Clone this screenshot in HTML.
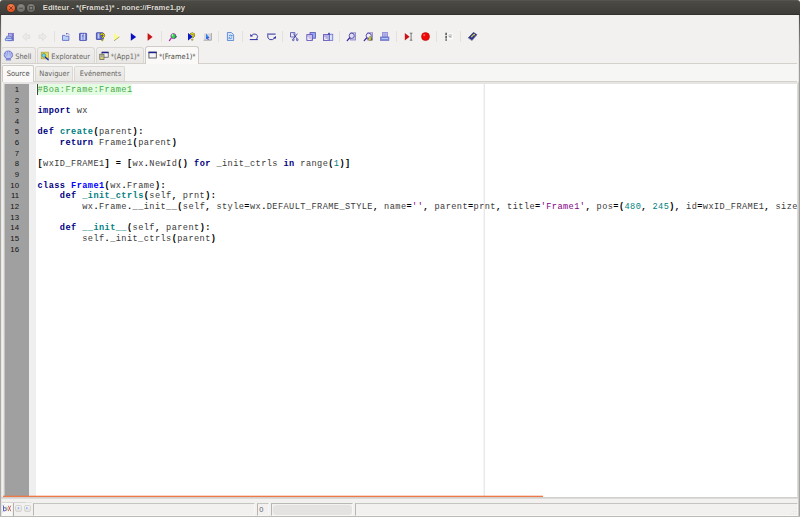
<!DOCTYPE html>
<html lang="fr">
<head>
<meta charset="utf-8">
<title>Editeur - *(Frame1)* - none://Frame1.py</title>
<style>
html,body{margin:0;padding:0;}
body{width:800px;height:517px;overflow:hidden;background:#f2f1f0;position:relative;
 font-family:"Liberation Sans","DejaVu Sans",sans-serif;color:#3c3b37;}
.abs{position:absolute;}
/* window title bar */
#titlebar{left:0;top:0;width:800px;height:15px;
 background:linear-gradient(#5b5a53 0%,#4b4a45 10%,#45443f 50%,#3d3c38 93%,#32312d 94%);
 border-radius:3px 3px 0 0;}
#titlebar .ttl{left:42.8px;top:1.6px;font-size:7.7px;line-height:11px;font-weight:bold;color:#dfdbd2;
 white-space:nowrap;text-shadow:0 0 1px #2a2925;}
.wbtn{width:8.4px;height:8.4px;border-radius:50%;top:3.85px;box-sizing:border-box;}
#bclose{left:6.75px;background:radial-gradient(circle at 50% 30%,#f6875c,#e8551f 65%,#df4a16);box-shadow:0 0 0 0.5px #3a2a22;}
#bmin{left:16.8px;background:radial-gradient(circle at 50% 30%,#8d8b84,#6d6c66 70%);box-shadow:0 0 0 0.5px #33322e;}
#bmax{left:26.8px;background:radial-gradient(circle at 50% 30%,#8d8b84,#6d6c66 70%);box-shadow:0 0 0 0.5px #33322e;}
#winleft{left:0;top:15px;width:1px;height:502px;background:linear-gradient(#4c4b46 0px,#8b8985 30px,#a9a7a3 60px,#aeaca8 100%);}
#winright{left:799px;top:15px;width:1px;height:502px;background:linear-gradient(#4c4b46 0px,#8b8985 30px,#a09e9a 60px,#a5a39f 100%);}
#winright2{left:798px;top:15px;width:1px;height:502px;background:linear-gradient(#e6e5e3 0px,#e6e5e3 66px,#cdcbc7 68px,#cdcbc7 100%);}
/* toolbar */
.sep{width:1px;height:13px;top:30px;background:#dcdad6;}
.ico{top:32px;width:11px;height:11px;}
/* notebook tabs */
.tab{box-sizing:border-box;border:1px solid #dbd8d4;border-bottom:none;border-radius:3px 3px 0 0;
 background:linear-gradient(#f0efed,#e9e7e4);font-family:"DejaVu Sans Condensed","DejaVu Sans","Liberation Sans",sans-serif;font-size:7.4px;line-height:10px;white-space:nowrap;color:#66655f;}
.tab.sel{z-index:2;background:#faf9f8;border-color:#cfccc7;color:#4a4945;}
.tab span{position:absolute;}
#tabline1{left:1px;top:63px;width:796px;height:1px;background:#d4d1cc;}
#tabline2{left:2px;top:81px;width:795px;height:1px;background:#d4d1cc;}
/* editor */
#edframe{left:3px;top:82px;width:795px;height:415px;background:#e6e5e3;}
#edl{left:4px;top:84px;width:1px;height:412px;background:#c6c5c4;}
#edr{left:797px;top:84px;width:1px;height:412px;background:#dddbd8;}
#winl1{left:1px;top:15px;width:1px;height:502px;background:#e6e5e3;}
#editor{left:5px;top:84px;width:791.5px;height:412px;background:#fff;overflow:hidden;}
#gutter{left:0;top:0;width:24px;height:412px;background:#a0a0a0;}
#fold{left:24px;top:0;width:7px;height:412px;background:#efefef;}
#edge{left:478px;top:0;width:2px;height:412px;background:linear-gradient(90deg,#f5f5f5 50%,#e9e9e9 50%);}
#caret{left:32px;top:0;width:1px;height:10.64px;background:#3a4a3a;}
.ln{left:0;width:14px;text-align:right;font-size:7.8px;line-height:10.64px;height:10.64px;color:#141414;
 font-family:"Liberation Sans","DejaVu Sans",sans-serif;}
.cl{left:32.5px;white-space:pre;font-family:"Liberation Mono","DejaVu Sans Mono",monospace;font-size:8.6px;letter-spacing:0.432px;
 line-height:10.64px;height:10.64px;color:#3a3a3a;}
.k{color:#00007f;font-weight:bold;}
.d{color:#007f7f;font-weight:bold;}
.c{color:#0000ff;font-weight:bold;}
.o{color:#000;font-weight:bold;}
.n{color:#007f7f;}
.s{color:#7f007f;}
.cm{color:#4aa84a;}
#cmbg{left:32.5px;top:0;width:94px;height:10.64px;background:#e3fde3;}
#hscroll{left:3px;top:496px;width:540px;height:1px;background:#ee7848;box-shadow:0 -1px 0 rgba(238,120,72,0.3);}
#edbottom{left:1px;top:497px;width:797px;height:1px;background:#d2d0cd;box-shadow:0 1px 0 #dddbd9;}
#htrack{left:5px;top:496px;width:792px;height:1px;background:#fff;}
/* status bar */
#status{left:0;top:497px;width:800px;height:20px;}
.sbtn{box-sizing:border-box;width:7px;height:7px;border:1px solid #d6d4d0;border-radius:2px;background:linear-gradient(#f4f4f3,#e4e3e1);}
.sfield{box-sizing:border-box;border:1px solid #c6c4c0;border-left-color:#b8b6b2;border-right-color:#f7f7f6;border-bottom-color:#f7f7f6;height:12.5px;}
</style>
</head>
<body>
<div id="titlebar" class="abs">
  <div id="bclose" class="abs wbtn"></div>
  <div id="bmin" class="abs wbtn"></div>
  <div id="bmax" class="abs wbtn"></div>
  <svg class="abs" style="left:0;top:0" width="40" height="14" viewBox="0 0 40 14">
   <path d="M9.3 6.4 l3.3 3.3 M12.6 6.4 l-3.3 3.3" stroke="#7a3014" stroke-width="0.9" stroke-linecap="round"/>
   <path d="M19.2 8.2 h3.6" stroke="#4a4944" stroke-width="1.1"/>
   <rect x="29.3" y="6.4" width="3.4" height="3.4" fill="none" stroke="#4a4944" stroke-width="0.9"/>
  </svg>
  <div class="abs ttl">Editeur - *(Frame1)* - none://Frame1.py</div>
</div>
<div id="winleft" class="abs"></div>
<div id="winright2" class="abs"></div>
<div id="winright" class="abs"></div>

<!-- TOOLBAR -->
<!--TB-->
<svg class="abs" style="left:0;top:28px" width="800" height="18" viewBox="0 28 800 18">
 <!-- separators -->
 <g fill="#e3e1de">
  <rect x="54" y="31" width="1" height="11"/><rect x="161" y="31" width="1" height="11"/>
  <rect x="218" y="31" width="1" height="11"/><rect x="242" y="31" width="1" height="11"/>
  <rect x="282" y="31" width="1" height="11"/><rect x="339" y="31" width="1" height="11"/>
  <rect x="396" y="31" width="1" height="11"/><rect x="436" y="31" width="1" height="11"/>
  <rect x="460" y="31" width="1" height="11"/>
 </g>
 <!-- 1 inspector / stacked docs -->
 <g>
  <rect x="8.6" y="33.3" width="5" height="7.4" fill="#b3acE4" stroke="#6a62bc" stroke-width="0.7"/>
  <rect x="11.8" y="34" width="1.4" height="6.2" fill="#7b72cc"/>
  <path d="M6.8 36.2 h3.4 l0.8 0.8 h0.8 v1.4 h-5.6z" fill="#b4cef7" stroke="#5566c2" stroke-width="0.7"/>
  <rect x="5.3" y="38.3" width="6.8" height="2.3" rx="0.6" fill="#bcd5f9" stroke="#4a5cbc" stroke-width="0.7"/>
 </g>
 <!-- 2 back arrow (disabled) -->
 <path d="M22.3 36.7 l4-3.8 v2.1 h3.5 v3.4 h-3.5 v2.1z" fill="#ebeae8" stroke="#dddbd8" stroke-width="0.7"/>
 <!-- 3 fwd arrow (disabled) -->
 <path d="M46.5 36.7 l-4-3.8 v2.1 h-3.5 v3.4 h3.5 v2.1z" fill="#ebeae8" stroke="#dddbd8" stroke-width="0.7"/>
 <!-- 4 open folder -->
 <g>
  <path d="M62.5 35.4 h2.4 l0.8 0.8 h3.2 v4.2 h-6.4z" fill="#b8d2f8" stroke="#5a62c2" stroke-width="0.8"/>
  <path d="M66.4 34 q1.8-1.2 3.2 1.2" fill="none" stroke="#4a4eb8" stroke-width="0.7" stroke-dasharray="1 0.5"/>
  <path d="M66 33 l1.6 0.2 l-1 1.4z" fill="#3a3eb0"/>
 </g>
 <!-- 5 save -->
 <g>
  <rect x="79.5" y="33.3" width="7.1" height="7.1" rx="0.5" fill="#6a72cc" stroke="#4448b0" stroke-width="0.8"/>
  <rect x="80.8" y="34" width="1.4" height="6" fill="#c4d0f8"/>
  <rect x="83.6" y="34" width="1.6" height="6" fill="#c4d0f8"/>
  <rect x="82.3" y="37" width="1.2" height="3" fill="#a9b6ee"/>
  <rect x="82.2" y="33.8" width="0.8" height="0.8" fill="#fff"/><rect x="84" y="33.8" width="0.8" height="0.8" fill="#fff"/>
 </g>
 <!-- 6 save as -->
 <g>
  <rect x="96.4" y="32.7" width="6.8" height="6.8" rx="0.5" fill="#5a68c4" stroke="#3c44a8" stroke-width="0.8"/>
  <rect x="97.6" y="33.4" width="1.9" height="5.2" fill="#c2ccf2"/>
  <path d="M100.6 35 q1-1.6 2.8-0.8 q1.6 1.2 -0.2 2.6 l-0.8 1" fill="none" stroke="#3c3a10" stroke-width="2"/>
  <path d="M100.6 35 q1-1.6 2.8-0.8 q1.6 1.2 -0.2 2.6 l-0.8 1" fill="none" stroke="#e8dc10" stroke-width="1.2"/>
  <circle cx="102.3" cy="40" r="0.9" fill="#d8cc10" stroke="#3c3a10" stroke-width="0.3"/>
 </g>
 <!-- 7 run (yellow) -->
 <path d="M114 33 l5.4 3.9 l-5.4 3.9z" fill="#fcfc8c"/>
 <path d="M119.4 36.9 l-5.4 3.9" stroke="#8a8a60" stroke-width="0.7" fill="none"/>
 <!-- 8 run (blue) -->
 <path d="M130.8 33 l5.4 3.9 l-5.4 3.9z" fill="#0c10c0"/>
 <!-- 9 run (red) -->
 <path d="M147.6 33 l5 3.9 l-5 3.9z" fill="#c81414"/>
 <!-- 10 magnifier green -->
 <g>
  <path d="M169.4 40.6 l1.8-2.4" stroke="#b020b0" stroke-width="1.2" stroke-linecap="round"/>
  <circle cx="173.4" cy="36.1" r="2.5" fill="#24e048" stroke="#a428a4" stroke-width="0.8"/>
  <circle cx="172.4" cy="35" r="0.8" fill="#e8ffe8"/>
  <path d="M175.2 35.4 l1.4 1.6 l-2.4 1.4" stroke="#1a5a5a" stroke-width="0.8" fill="none"/>
 </g>
 <!-- 11 blue triangle + ? -->
 <g>
  <path d="M188 33 l5 3.8 l-5 3.8z" fill="#0c18c4"/>
  <path d="M190.6 34.6 q1-1.6 2.8-0.8 q1.6 1.2 -0.2 2.6 l-0.8 1" fill="none" stroke="#3c3a10" stroke-width="2"/>
  <path d="M190.6 34.6 q1-1.6 2.8-0.8 q1.6 1.2 -0.2 2.6 l-0.8 1" fill="none" stroke="#ece010" stroke-width="1.2"/>
  <circle cx="192.2" cy="39.6" r="0.9" fill="#dccc10" stroke="#3c3a10" stroke-width="0.3"/>
 </g>
 <!-- 12 grey box w/ cursor -->
 <g>
  <rect x="203.6" y="33" width="7.8" height="7.2" fill="#d8d6d9"/>
  <path d="M203.6 40.2 v-7.2 h7.8" fill="none" stroke="#f4f4f4" stroke-width="0.8"/>
  <path d="M211.4 33 v7.2 h-7.8" fill="none" stroke="#9c9a9c" stroke-width="0.8"/>
  <path d="M206 33.8 l3.4 4 l-1.4 0.1 l0.8 1.8 l-0.9 0.3 l-0.8-1.8 l-1.1 0.8z" fill="#1c48e4"/>
  <path d="M206.3 34.4 l2 2.6 l-2 0.4z" fill="#24b0f0"/>
 </g>
 <!-- 13 refresh doc -->
 <g>
  <path d="M227.4 32.5 h4 l2.2 2.2 v5.8 h-6.2z" fill="#d3e3f9" stroke="#4c7cca" stroke-width="0.8"/>
  <path d="M229 35.8 q1.4-1.4 2.8 0 M232 37.8 q-1.4 1.4 -2.8 0" fill="none" stroke="#4a88d8" stroke-width="0.9"/>
  <path d="M232.4 34.4 v1.8 h-1.8z M228.6 39.2 v-1.8 h1.8z" fill="#4a88d8"/>
 </g>
 <!-- 14 undo -->
 <g fill="none" stroke="#2a2aa0" stroke-width="0.9">
  <path d="M249.8 39.6 h8" stroke-width="1"/>
  <path d="M251.4 35.6 q2.4-2.6 5-1.2 q2.4 1.8 0.2 4.8" />
  <path d="M250.2 34 l0.2 2.8 l2.6-0.6z" fill="#2a2aa0" stroke="none"/>
 </g>
 <!-- 15 redo -->
 <g fill="none" stroke="#2a2aa0" stroke-width="0.9">
  <path d="M267 34.1 h8.6" stroke-width="1"/>
  <path d="M267.8 35 q-0.8 3.4 2 4.6 q2.8 0.8 5-1.6" />
  <path d="M276 36 l-0.2 2.8 l-2.6-0.8z" fill="#2a2aa0" stroke="none"/>
 </g>
 <!-- 16 cut -->
 <g>
  <path d="M290.5 32.6 h4.4 v4.4 h-4.4z" fill="#e6e9fc" stroke="#4646a8" stroke-width="0.8"/>
  <path d="M293.4 33.6 l3.8 5.4 M297.4 33.6 l-4 5.4" stroke="#3838a0" stroke-width="0.8" fill="none"/>
  <circle cx="293.3" cy="39.8" r="0.9" fill="#cfd6f6" stroke="#3838a0" stroke-width="0.7"/>
  <circle cx="297.3" cy="39.8" r="0.9" fill="#cfd6f6" stroke="#3838a0" stroke-width="0.7"/>
 </g>
 <!-- 17 copy -->
 <g>
  <rect x="310" y="32.6" width="5.4" height="5.6" fill="#8eaaf0" stroke="#5c4eb4" stroke-width="0.8"/>
  <rect x="306.8" y="34.6" width="5.8" height="5.8" fill="#c6bfea" stroke="#5c4eb4" stroke-width="0.8"/>
  <path d="M308 37 v2.4 h2.6" stroke="#fff" stroke-width="0.9" fill="none"/>
 </g>
 <!-- 18 paste -->
 <g>
  <rect x="323.4" y="34.6" width="6" height="5.8" fill="#b6afe4" stroke="#5c4eb4" stroke-width="0.8"/>
  <rect x="329.6" y="34.2" width="3.2" height="6.2" fill="#bcd6f8" stroke="#6c62c0" stroke-width="0.7"/>
  <path d="M327.6 34.4 l1.4-2.2 l1.4 2.2z" fill="#3434a0"/>
  <path d="M324.8 37 v2.4 h2.6" stroke="#fff" stroke-width="0.9" fill="none"/>
  <rect x="330.4" y="35.4" width="1" height="4.2" fill="#eef5fe"/>
 </g>
 <!-- 19 find -->
 <g>
  <rect x="350.6" y="32.8" width="5" height="7.2" fill="#ccc8ea" stroke="#8880c4" stroke-width="0.8"/>
  <circle cx="351.7" cy="35.8" r="2.6" fill="#dde0f5" stroke="#5444a4" stroke-width="0.9"/>
  <path d="M347.2 40.6 l2.4-2.6" stroke="#3424a4" stroke-width="1.2" stroke-linecap="round"/>
 </g>
 <!-- 20 find + yellow -->
 <g>
  <rect x="367.6" y="32.8" width="5" height="7.2" fill="#ccc8ea" stroke="#8880c4" stroke-width="0.8"/>
  <circle cx="368.7" cy="35.8" r="2.6" fill="#eceef9" stroke="#5444a4" stroke-width="0.9"/>
  <path d="M364.2 40.6 l2.4-2.6" stroke="#3424a4" stroke-width="1.2" stroke-linecap="round"/>
  <path d="M369 40.4 v-3 l1-1.2 l1 1.2 v3z" fill="#f0f000" stroke="#4c4a10" stroke-width="0.4"/>
  <path d="M371.4 37.6 v2.8" stroke="#3a3a5a" stroke-width="0.7"/>
 </g>
 <!-- 21 print -->
 <g>
  <rect x="382.6" y="32.5" width="4.8" height="4.6" fill="#b8b8ea" stroke="#8684d2" stroke-width="0.8"/>
  <path d="M384.2 33.6 v3 M385.8 33.6 v3" stroke="#9896da" stroke-width="0.6"/>
  <rect x="380.5" y="37" width="8.4" height="3.4" fill="#7686da" stroke="#6c6cc4" stroke-width="0.7"/>
  <rect x="381.6" y="38.1" width="6.4" height="1" fill="#b4d2f8"/>
 </g>
 <!-- 22 run to cursor -->
 <g>
  <path d="M404.8 33 l4.8 3.7 l-4.8 3.7z" fill="#c81414"/>
  <path d="M411.1 33.2 v7 M409.8 33.2 h2.6 M409.8 40.2 h2.6" stroke="#5a5a5a" stroke-width="0.8" fill="none"/>
 </g>
 <!-- 23 breakpoint -->
 <g>
  <circle cx="425.5" cy="36.6" r="4" fill="#f00808" stroke="#b40808" stroke-width="0.6"/>
  <circle cx="424.2" cy="35.2" r="1.1" fill="#ff7060" opacity="0.8"/>
 </g>
 <!-- 24 bookmarks -->
 <g>
  <rect x="447.4" y="33.2" width="5.6" height="6.2" fill="#fcfcfc"/>
  <path d="M446.1 32.8 v8" stroke="#2a2a2a" stroke-width="1.2" stroke-dasharray="2.4 0.8"/>
  <path d="M448.6 35 h3.6 M448.6 36.8 h3 M449.2 35.8 l2 2" stroke="#7c7c7c" stroke-width="0.6" fill="none"/>
 </g>
 <!-- 25 help book -->
 <g>
  <path d="M468.4 37.8 l5-5.4 l3.4 2.2 l-4.8 5.6z" fill="#2c3496" stroke="#20266e" stroke-width="0.6"/>
  <path d="M468.4 37.8 l3.6 2.4 l-0.2 0.8 l-3.6-2.4z" fill="#a0a0b2"/>
  <path d="M472 40.2 l4.8-5.6 v0.8 l-4.8 5.6z" fill="#8c8ca6"/>
  <path d="M471.2 37.2 l2.6-2.6" stroke="#e8dc28" stroke-width="1.1"/>
  <circle cx="474.2" cy="34.6" r="0.8" fill="#e8dc28"/>
 </g>
</svg>
<!--/TB-->

<!-- TABS -->
<!--TABS-->
<div id="nbpanel" class="abs" style="left:1px;top:64px;width:797px;height:18px;background:#f6f6f5;"></div>
<div class="abs tab" style="left:1px;top:47px;width:34.5px;height:17px;"><span style="left:13.2px;top:3.5px">Shell</span></div>
<div class="abs tab" style="left:36.5px;top:47px;width:58.5px;height:17px;"><span style="left:13.8px;top:3.5px">Explorateur</span></div>
<div class="abs tab" style="left:96px;top:47px;width:47.5px;height:17px;"><span style="left:13.8px;top:3.5px">*(App1)*</span></div>
<div class="abs tab sel" style="left:144.5px;top:46px;width:54.5px;height:18px;"><span style="left:13.4px;top:4.5px">*(Frame1)*</span></div>
<svg class="abs" style="left:0;top:48px;z-index:3" width="200" height="16" viewBox="0 48 200 16">
 <!-- shell icon -->
 <g>
  <path d="M8.4 50.9 c3 0 4.6 2.4 4.2 4.6 c-0.4 1.8 -1.6 2.8 -2.6 3.2 h-3.2 c-1-0.4 -2.2-1.4 -2.6-3.2 c-0.4-2.2 1.2-4.6 4.2-4.6z" fill="#8c9ae4" stroke="#5c68c4" stroke-width="0.7"/>
  <path d="M8.4 51.4 v6.6 M6.4 52 l1.3 6 M10.4 52 l-1.3 6 M4.8 54 l2.2 4 M12 54 l-2.2 4" stroke="#e9ecfc" stroke-width="0.55" fill="none"/>
  <path d="M6.6 58.6 h3.6 l0.7 1.6 h-5z" fill="#8892dc" stroke="#6874cc" stroke-width="0.4"/>
 </g>
 <!-- explorer icon -->
 <g>
  <rect x="41.2" y="52.2" width="7.2" height="6.6" fill="#e6da58" stroke="#a89c38" stroke-width="0.7"/>
  <circle cx="43.8" cy="55.4" r="1.9" fill="#58dcec" stroke="#6a6a5a" stroke-width="0.6"/>
  <path d="M45.4 57.2 l2.8 2.6" stroke="#1c2cb4" stroke-width="1.3" stroke-linecap="round"/>
 </g>
 <!-- app icon -->
 <g>
  <rect x="102" y="52.2" width="6.2" height="5" fill="#f2f2f2" stroke="#46464e" stroke-width="0.7"/>
  <rect x="101.7" y="51.8" width="6.8" height="1.4" fill="#20208c"/>
  <rect x="99.8" y="54.2" width="4.2" height="5.2" fill="#d4cc78" stroke="#5a5a46" stroke-width="0.7"/>
  <rect x="100.9" y="55.2" width="1.8" height="1.8" fill="#8c9ad8"/>
 </g>
 <!-- frame icon -->
 <g>
  <rect x="148.9" y="52.2" width="7.4" height="5.8" fill="#f4f4f4" stroke="#44444e" stroke-width="0.8"/>
  <rect x="148.5" y="51.7" width="8.2" height="1.5" fill="#20208c"/>
 </g>
</svg>
<div class="abs tab sel" style="left:2px;top:64.5px;width:31.5px;height:17.5px;border-radius:2px 2px 0 0;"><span style="left:3.7px;top:3.4px">Source</span></div>
<div class="abs tab" style="left:34.5px;top:66px;width:38.5px;height:15px;border-radius:2px 2px 0 0;"><span style="left:3.8px;top:2.4px;">Naviguer</span></div>
<div class="abs tab" style="left:74px;top:66px;width:50.5px;height:15px;border-radius:2px 2px 0 0;"><span style="left:4.8px;top:2.4px">Evénements</span></div>
<!--/TABS-->
<div id="tabline1" class="abs"></div>
<div id="tabline2" class="abs"></div>

<!-- EDITOR -->
<div id="edframe" class="abs"></div>
<div id="edl" class="abs"></div>
<div id="edr" class="abs"></div>
<div id="winl1" class="abs"></div>
<div id="editor" class="abs">
  <div id="gutter" class="abs"></div>
  <div id="fold" class="abs"></div>
  <div id="edge" class="abs"></div>
  <div id="cmbg" class="abs"></div>
  <div id="caret" class="abs"></div>
<!--CODE-->
  <div class="abs ln" style="top:0.90px">1</div>
  <div class="abs cl" style="top:0.90px"><span class="cm">#Boa:Frame:Frame1</span></div>
  <div class="abs ln" style="top:11.54px">2</div>
  <div class="abs ln" style="top:22.18px">3</div>
  <div class="abs cl" style="top:22.18px"><span class="k">import</span> wx</div>
  <div class="abs ln" style="top:32.82px">4</div>
  <div class="abs ln" style="top:43.46px">5</div>
  <div class="abs cl" style="top:43.46px"><span class="k">def</span> <span class="d">create</span><span class="o">(</span>parent<span class="o">):</span></div>
  <div class="abs ln" style="top:54.10px">6</div>
  <div class="abs cl" style="top:54.10px">    <span class="k">return</span> Frame1<span class="o">(</span>parent<span class="o">)</span></div>
  <div class="abs ln" style="top:64.74px">7</div>
  <div class="abs ln" style="top:75.38px">8</div>
  <div class="abs cl" style="top:75.38px"><span class="o">[</span>wxID_FRAME1<span class="o">]</span> <span class="o">=</span> <span class="o">[</span>wx<span class="o">.</span>NewId<span class="o">()</span> <span class="k">for</span> _init_ctrls <span class="k">in</span> range<span class="o">(</span><span class="n">1</span><span class="o">)]</span></div>
  <div class="abs ln" style="top:86.02px">9</div>
  <div class="abs ln" style="top:96.66px">10</div>
  <div class="abs cl" style="top:96.66px"><span class="k">class</span> <span class="c">Frame1</span><span class="o">(</span>wx<span class="o">.</span>Frame<span class="o">):</span></div>
  <div class="abs ln" style="top:107.30px">11</div>
  <div class="abs cl" style="top:107.30px">    <span class="k">def</span> <span class="d">_init_ctrls</span><span class="o">(</span>self<span class="o">,</span> prnt<span class="o">):</span></div>
  <div class="abs ln" style="top:117.94px">12</div>
  <div class="abs cl" style="top:117.94px">        wx<span class="o">.</span>Frame<span class="o">.</span>__init__<span class="o">(</span>self<span class="o">,</span> style<span class="o">=</span>wx<span class="o">.</span>DEFAULT_FRAME_STYLE<span class="o">,</span> name<span class="o">=</span><span class="s">''</span><span class="o">,</span> parent<span class="o">=</span>prnt<span class="o">,</span> title<span class="o">=</span><span class="s">'Frame1'</span><span class="o">,</span> pos<span class="o">=(</span><span class="n">480</span><span class="o">,</span> <span class="n">245</span><span class="o">),</span> id<span class="o">=</span>wxID_FRAME1<span class="o">,</span> size<span class="o">=</span>wx<span class="o">.</span>Size<span class="o">(</span><span class="n">400</span><span class="o">,</span> <span class="n">250</span><span class="o">))</span></div>
  <div class="abs ln" style="top:128.58px">13</div>
  <div class="abs ln" style="top:139.22px">14</div>
  <div class="abs cl" style="top:139.22px">    <span class="k">def</span> <span class="d">__init__</span><span class="o">(</span>self<span class="o">,</span> parent<span class="o">):</span></div>
  <div class="abs ln" style="top:149.86px">15</div>
  <div class="abs cl" style="top:149.86px">        self<span class="o">.</span>_init_ctrls<span class="o">(</span>parent<span class="o">)</span></div>
  <div class="abs ln" style="top:160.50px">16</div>
<!--/CODE-->
</div>
<div id="htrack" class="abs"></div>
<div id="hscroll" class="abs"></div>
<div id="edbottom" class="abs"></div>

<!-- STATUS -->
<!--ST-->
<div id="status" class="abs">
 <div class="abs" style="left:2px;top:5px;width:24px;height:1px;background:#d8d6d2;"></div>
 <div class="abs" style="left:26px;top:5px;width:6px;height:1px;background:#e6e5e3;"></div>
 <div class="abs" style="left:2px;top:6px;width:9.5px;height:12.5px;background:#f9f9f8;"></div>
 <div class="abs" style="left:13px;top:6px;width:1px;height:12.5px;background:#b2b0ac;"></div>
 <div class="abs sbtn" style="left:14.5px;top:7.5px;"></div>
 <div class="abs sbtn" style="left:23.5px;top:7.5px;"></div>
 <div class="abs sfield" style="left:33px;top:6px;width:221.5px;"></div>
 <div class="abs sfield" style="left:257px;top:6px;width:12px;"><span class="abs" style="left:1.2px;top:1.7px;font-size:7.4px;line-height:8px;color:#5c6270;">0</span></div>
 <div class="abs sfield" style="left:271px;top:6px;width:82px;border-top-color:#bab8b4;"><div class="abs" style="left:0.5px;top:0.5px;width:79.5px;height:10.5px;border-radius:3.5px;background:#e4e3e1;"></div></div>
 <div class="abs sfield" style="left:354.5px;top:6px;width:443.5px;"></div>
 <svg class="abs" style="left:1px;top:7px" width="12" height="10" viewBox="1 504 12 10">
  <path d="M3.5 505.6 v5.4 M3.5 508.2 q1.6-1.2 2.6 0 q0.7 1.8 -0.9 2.6 h-1.7" fill="none" stroke="#4a4eb6" stroke-width="0.9"/>
  <path d="M2.3 505 l1 0.8 M2.3 512 l1-0.8 M4.6 504.6 l-0.6 0.8" stroke="#7a7ccc" stroke-width="0.5"/>
  <path d="M6.3 506.6 l1.5 2 l-1.5 2.4" fill="none" stroke="#a8a444" stroke-width="0.8"/>
  <path d="M8.2 505.6 l2.6 5.6 M10.8 505.6 l-2.6 5.6" fill="none" stroke="#b84a4a" stroke-width="0.8"/>
 </svg>
 <svg class="abs" style="left:14px;top:7px" width="18" height="9" viewBox="14 504 18 9">
  <path d="M19.2 506.8 l-2 1.3 l2 1.3z" fill="#8ab4f0"/>
  <path d="M26.2 506.8 l2 1.3 l-2 1.3z" fill="#8ab4f0"/>
 </svg>
 <svg class="abs" style="left:788px;top:9px" width="10" height="10" viewBox="0 0 10 10"><g fill="#e2e0dd"><rect x="7.5" y="2" width="1" height="1"/><rect x="5" y="4.8" width="1" height="1"/><rect x="7.5" y="4.8" width="1" height="1"/><rect x="2.5" y="7.4" width="1" height="1"/><rect x="5" y="7.4" width="1" height="1"/><rect x="7.5" y="7.4" width="1" height="1"/></g></svg>
 <div class="abs" style="left:0;top:19px;width:800px;height:1px;background:#bcbab6;"></div>
</div>
<!--/ST-->
</body>
</html>
